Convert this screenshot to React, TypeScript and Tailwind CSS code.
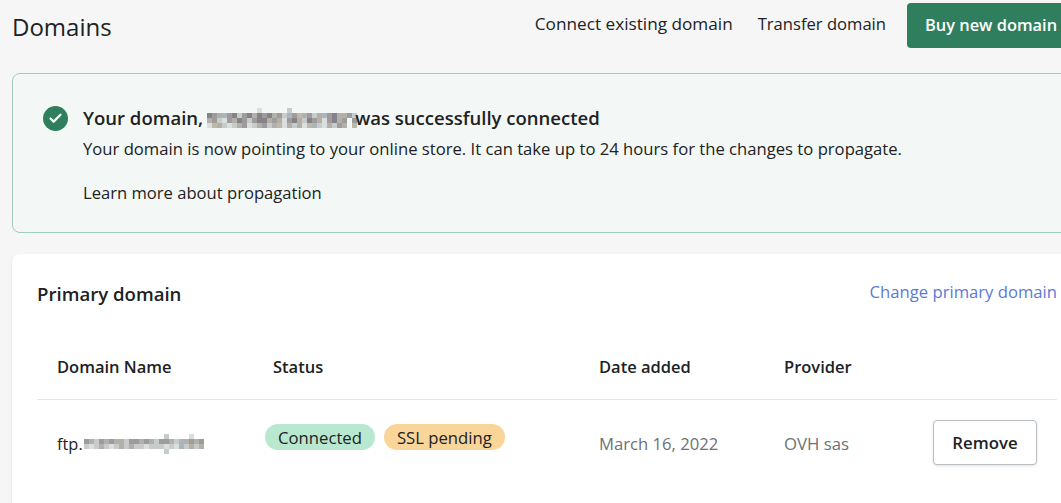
import { Check } from 'lucide-react';

const font = "font-['Open_Sans','Noto_Sans',sans-serif]";

const palette: Record<string, string> = {
  a: '#85828a',
  b: '#9d9b9c',
  c: '#b3b0aa',
  d: '#c6cccc',
  e: '#bfb8a6',
  f: '#dadfde',
  g: '#a9b6be',
};

// pixelated blur over the redacted domain names
function Mosaic({ rows, size }: { rows: string[]; size: number }) {
  return (
    <svg width={rows[0].length * size} height={rows.length * size} className="shrink-0" shapeRendering="crispEdges">
      {rows.map((row, y) =>
        row.split('').map((k, x) =>
          palette[k] ? <rect key={`${x}-${y}`} x={x * size} y={y * size} width={size} height={size} fill={palette[k]} /> : null,
        ),
      )}
    </svg>
  );
}

const bannerRows = [
  '..........f.....d.............',
  'abcgbadbacabacbdgbecbdcgbaccbd',
  'cbdfbcabdbaacbcfbacdabcfbacb.b',
  'fecdfdcbfdcbdcefcdcfegdfcdbc.e',
];

const rowRows = [
  '................d....f..',
  'bcdbcbccdbbcbcdbbcdgcbcb',
  'dfdcdfdcdcddfdddfdfgdcdc',
  '................d.......',
];

export default function App() {
  return (
    <div className={`w-[1061px] h-[503px] overflow-hidden bg-[#f6f6f7] pl-3 text-[#202223] ${font}`}>
      <div className="w-[1070px]">
        {/* Header */}
        <div className="h-[73px] flex items-start justify-between pr-[7px]">
          <h1 className="mt-[11px] text-[24px] leading-8 font-medium">Domains</h1>
          <div className="flex items-start pt-[3px]">
            <span className="mt-[9px] text-[17.2px] leading-6 font-medium">Connect existing domain</span>
            <span className="ml-[25px] mt-[9px] text-[16.6px] leading-6 font-medium">Transfer domain</span>
            <button className="ml-[21px] h-[45px] w-[168px] rounded bg-[#2f7f5f] text-white text-[16.4px] font-semibold text-left pl-[18px] whitespace-nowrap">
              Buy new domain
            </button>
          </div>
        </div>

        {/* Success banner */}
        <div className="h-[160px] rounded-lg border border-[#9fcdb8] bg-[#f3f8f6] flex pl-[30px] pt-[30px]">
          <div className="w-[25px] h-[25px] mt-[2px] rounded-full bg-[#2f7f5f] flex items-center justify-center">
            <Check size={15} strokeWidth={3.5} className="text-white" />
          </div>
          <div className="ml-[15px]">
            <div className="flex items-center h-[28px] text-[18.55px] font-semibold">
              <span>Your domain,</span>
              <span className="ml-[4px] -mr-[2px]">
                <Mosaic rows={bannerRows} size={5} />
              </span>
              <span>was successfully connected</span>
            </div>
            <p className="mt-[5px] text-[16.65px] leading-6">
              Your domain is now pointing to your online store. It can take up to 24 hours for the changes to propagate.
            </p>
            <p className="mt-[20px] text-[16.6px] leading-6">Learn more about propagation</p>
          </div>
        </div>

        {/* Primary domain card */}
        <div className="mt-[21px] h-[260px] rounded-t-lg bg-white shadow-sm px-[25px]">
          <div className="flex items-start justify-between pt-[26px]">
            <h2 className="text-[18.6px] leading-7 font-semibold">Primary domain</h2>
            <a className="text-[16.65px] leading-6 text-[#5c7ad4]">Change primary domain</a>
          </div>

          <div className="mt-[30px] h-[62px] flex items-center border-b border-[#e1e3e5] pb-[3px] pl-5 text-[16.5px] font-semibold">
            <span className="w-[216px]">Domain Name</span>
            <span className="w-[326px]">Status</span>
            <span className="w-[185px]">Date added</span>
            <span>Provider</span>
          </div>

          <div className="flex items-start pl-5">
            <div className="w-[216px] mt-[32px] flex items-center text-[16.4px] leading-6">
              <span>ftp.</span>
              <span className="ml-[1px]">
                <Mosaic rows={rowRows} size={5} />
              </span>
            </div>
            <div className="w-[326px] mt-[24px] -ml-2 flex gap-[9px] text-[16.7px] leading-[28px]">
              <span className="h-[26px] px-[13px] rounded-full bg-[#b8e8d0]">Connected</span>
              <span className="h-[26px] px-[13px] rounded-full bg-[#f9d59a]">SSL pending</span>
            </div>
            <span className="w-[185px] ml-2 mt-[32px] text-[16.65px] leading-6 text-[#6d7175]">March 16, 2022</span>
            <span className="w-[149px] mt-[32px] text-[16.8px] leading-6 text-[#6d7175]">OVH sas</span>
            <button className="mt-[20px] w-[104px] h-[45px] rounded border border-[#babfc3] bg-white text-[16.8px] font-semibold shadow-sm">
              Remove
            </button>
          </div>
        </div>
      </div>
    </div>
  );
}
